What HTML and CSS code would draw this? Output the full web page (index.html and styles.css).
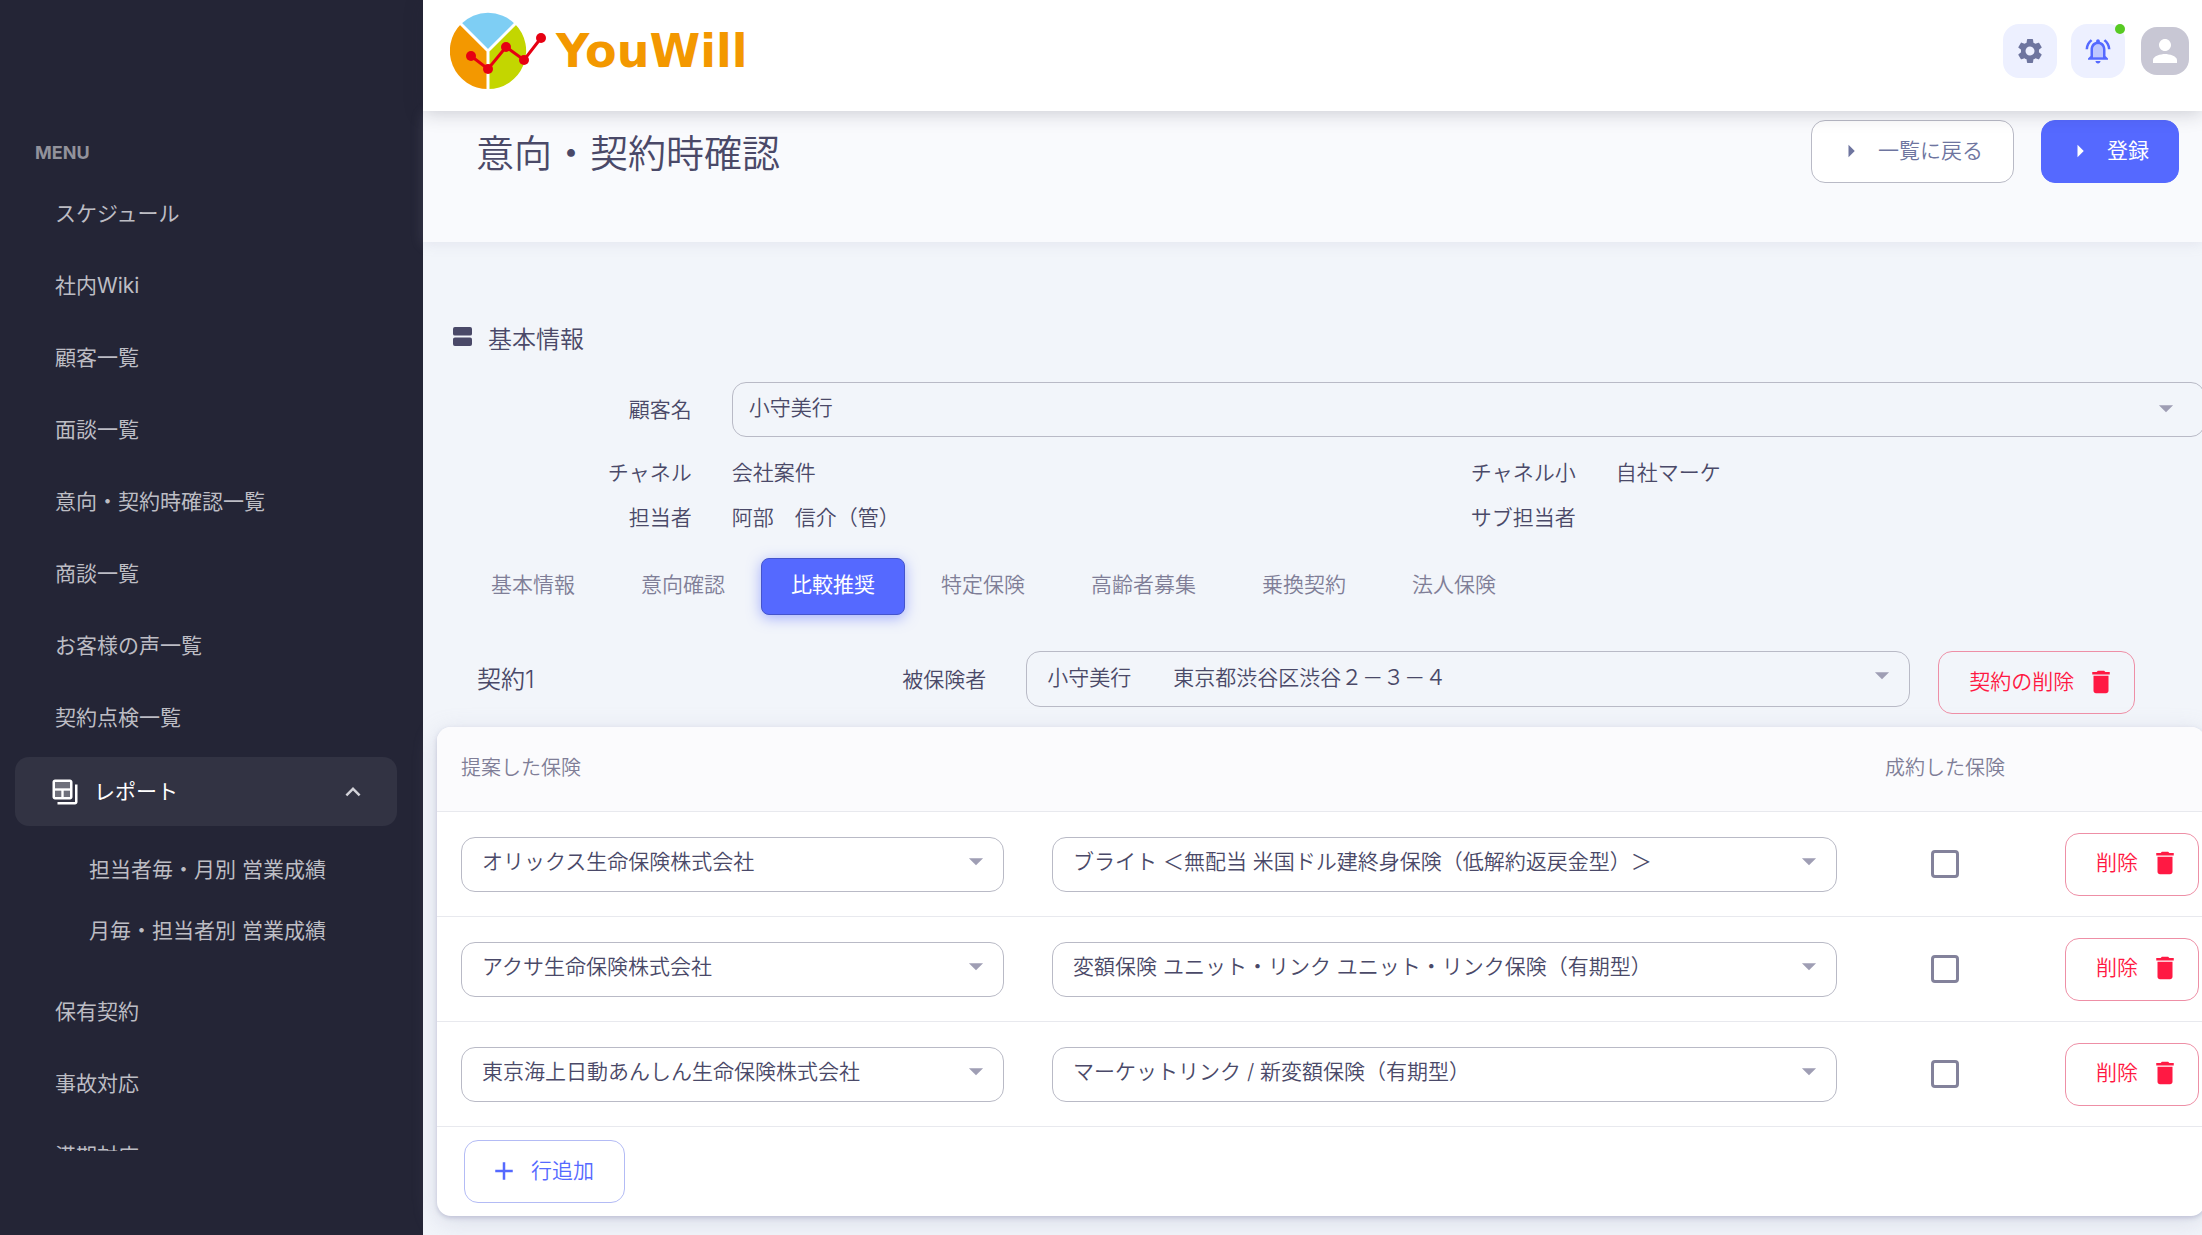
FILE: index.html
```html
<!DOCTYPE html>
<html lang="ja">
<head>
<meta charset="utf-8">
<meta name="viewport" content="width=device-width, initial-scale=1">
<title>意向・契約時確認 | YouWill</title>
<link rel="stylesheet" href="styles.css">
</head>
<body>
<svg class="sprite" aria-hidden="true">
  <symbol id="i-delete" viewBox="0 0 24 24"><path d="M6 19c0 1.1.9 2 2 2h8c1.1 0 2-.9 2-2V7H6v12zM19 4h-3.5l-1-1h-5l-1 1H5v2h14V4z"/></symbol>
  <symbol id="i-right" viewBox="0 0 24 24"><path d="M10 17l5-5-5-5v10z"/></symbol>
  <symbol id="i-down" viewBox="0 0 24 24"><path d="M7 10l5 5 5-5z"/></symbol>
  <symbol id="i-add" viewBox="0 0 24 24"><path d="M19 13h-6v6h-2v-6H5v-2h6V5h2v6h6v2z"/></symbol>
  <symbol id="i-up" viewBox="0 0 24 24"><path d="M12 8l-6 6 1.410 1.410L12 10.830l4.590 4.580L18 14z"/></symbol>
  <symbol id="i-table" viewBox="0 0 24 24"><path opacity=".3" d="M4 4h12v5H4z"/><path opacity=".3" d="M4 11h5v5H4zM11 11h5v5h-5z"/><path d="M20 6v14H6v2h14c1.100 0 2-.9 2-2V6h-2z"/><path d="M16 2H4c-1.100 0-2 .9-2 2v12c0 1.100.9 2 2 2h12c1.100 0 2-.9 2-2V4c0-1.100-.9-2-2-2zM9 16H4v-5h5v5zm7 0h-5v-5h5v5zm0-7H4V4h12v5z"/></symbol>
  <symbol id="i-settings" viewBox="0 0 24 24"><path d="M19.140 12.940c.04-.3.06-.61.06-.94 0-.32-.02-.64-.07-.94l2.030-1.580c.18-.14.23-.41.12-.61l-1.920-3.320c-.12-.22-.37-.29-.59-.22l-2.390.96c-.5-.38-1.030-.7-1.620-.94l-.36-2.540c-.04-.24-.24-.41-.48-.41h-3.840c-.24 0-.43.17-.47.41l-.36 2.540c-.59.24-1.130.57-1.620.94l-2.390-.96c-.22-.08-.47 0-.59.22L2.740 8.870c-.12.21-.08.47.12.61l2.030 1.580c-.05.3-.09.63-.09.94s.02.64.07.94l-2.030 1.580c-.18.14-.23.41-.12.61l1.920 3.320c.12.22.37.29.59.22l2.390-.96c.5.38 1.030.7 1.620.94l.36 2.540c.05.24.24.41.48.41h3.840c.24 0 .44-.17.47-.41l.36-2.540c.59-.24 1.130-.56 1.620-.94l2.390.96c.22.08.47 0 .59-.22l1.920-3.320c.12-.22.07-.47-.12-.61l-2.010-1.580zM12 15.600c-1.980 0-3.600-1.620-3.600-3.600s1.620-3.600 3.600-3.600 3.600 1.620 3.600 3.600-1.620 3.600-3.600 3.600z"/></symbol>
  <symbol id="i-bell" viewBox="0 0 24 24"><path opacity=".3" d="M12 6.500c-2.490 0-4 2.020-4 4.500v6h8v-6c0-2.480-1.510-4.500-4-4.500z"/><path d="M12 22c1.100 0 2-.9 2-2h-4c0 1.100.9 2 2 2zm6-6v-5c0-3.070-1.630-5.640-4.500-6.320V4c0-.83-.67-1.500-1.500-1.500s-1.500.67-1.500 1.500v.68C7.640 5.360 6 7.920 6 11v5l-2 2v1h16v-1l-2-2zm-2 1H8v-6c0-2.480 1.510-4.500 4-4.500s4 2.020 4 4.500v6zM7.580 4.080L6.150 2.650C3.750 4.480 2.170 7.300 2.030 10.500h2c.15-2.650 1.510-4.970 3.550-6.420zm12.390 6.420h2c-.15-3.200-1.730-6.020-4.120-7.850l-1.420 1.430c2.020 1.450 3.390 3.770 3.540 6.420z"/></symbol>
  <symbol id="i-person" viewBox="0 0 24 24"><path d="M12 12c2.210 0 4-1.790 4-4s-1.790-4-4-4-4 1.790-4 4 1.790 4 4 4zm0 2c-2.670 0-8 1.340-8 4v2h16v-2c0-2.660-5.330-4-8-4z"/></symbol>
  <symbol id="i-agenda" viewBox="0 0 20 20"><rect width="20" height="9" rx="2"/><rect y="11" width="20" height="9" rx="2"/></symbol>
</svg>

<div class="app">
  <aside class="sidebar">
    <h2 class="menu-title">MENU</h2>
    <nav class="menu" aria-label="MENU">
      <a class="menu-item" href="#">スケジュール</a>
      <a class="menu-item" href="#">社内Wiki</a>
      <a class="menu-item" href="#">顧客一覧</a>
      <a class="menu-item" href="#">面談一覧</a>
      <a class="menu-item" href="#">意向・契約時確認一覧</a>
      <a class="menu-item" href="#">商談一覧</a>
      <a class="menu-item" href="#">お客様の声一覧</a>
      <a class="menu-item" href="#">契約点検一覧</a>
      <button class="menu-item menu-group" type="button" aria-expanded="true">
        <svg class="icon"><use href="#i-table"/></svg>
        <span>レポート</span>
        <svg class="icon menu-chevron"><use href="#i-up"/></svg>
      </button>
      <div class="submenu">
        <a class="submenu-item" href="#">担当者毎・月別 営業成績</a>
        <a class="submenu-item" href="#">月毎・担当者別 営業成績</a>
      </div>
      <a class="menu-item" href="#">保有契約</a>
      <a class="menu-item" href="#">事故対応</a>
      <a class="menu-item" href="#">満期対応</a>
    </nav>
  </aside>

  <div class="page">
    <header class="topbar">
      <a class="brand" href="#" aria-label="YouWill">
        <svg class="brand-mark" viewBox="0 0 100 78" aria-hidden="true">
          <path fill="#f39800" d="M38 39L11 12.100A38 38 0 0 0 38 77z"/>
          <path fill="#c3d600" d="M38 39L65 12.100A38 38 0 0 1 38 77z"/>
          <path fill="#7ecef4" d="M38 39L11 12.100A38 38 0 0 1 65 12.100z"/>
          <path fill="none" stroke="#fff" stroke-width="3" d="M10 11l28 28 28-28M38 39v39"/>
          <path fill="none" stroke="#e60012" stroke-width="3" d="M21 44l17 13 18-22 18 13 17-22"/>
          <g fill="#e60012"><circle cx="21" cy="44" r="5"/><circle cx="38" cy="57" r="5"/><circle cx="56" cy="35" r="5"/><circle cx="74" cy="48" r="5"/><circle cx="91" cy="26" r="5"/></g>
        </svg>
        <span class="brand-name">YouWill</span>
      </a>
      <div class="tools">
        <button class="tool tool-settings" type="button" aria-label="設定"><svg class="icon"><use href="#i-settings"/></svg></button>
        <button class="tool tool-bell" type="button" aria-label="通知"><svg class="icon"><use href="#i-bell"/></svg><span class="dot"></span></button>
        <button class="avatar" type="button" aria-label="アカウント"><svg class="icon"><use href="#i-person"/></svg></button>
      </div>
    </header>

    <section class="banner">
      <h1>意向・契約時確認</h1>
      <div class="banner-actions">
        <button class="btn btn-grey" type="button"><svg class="icon"><use href="#i-right"/></svg>一覧に戻る</button>
        <button class="btn btn-primary" type="button"><svg class="icon"><use href="#i-right"/></svg>登録</button>
      </div>
    </section>

    <main class="content">
      <h2 class="section-title"><svg><use href="#i-agenda"/></svg>基本情報</h2>

      <div class="field-row">
        <label class="field-label" for="customer">顧客名</label>
        <div class="select">
          <select id="customer"><option>小守美行</option></select>
          <svg class="icon"><use href="#i-down"/></svg>
        </div>
      </div>
      <dl class="facts">
        <div class="fact"><dt>チャネル</dt><dd>会社案件</dd></div>
        <div class="fact"><dt>チャネル小</dt><dd>自社マーケ</dd></div>
        <div class="fact"><dt>担当者</dt><dd>阿部　信介（管）</dd></div>
        <div class="fact"><dt>サブ担当者</dt><dd></dd></div>
      </dl>

      <div class="tabs" role="tablist">
        <button class="tab" type="button" role="tab">基本情報</button>
        <button class="tab" type="button" role="tab">意向確認</button>
        <button class="tab tab-active" type="button" role="tab" aria-selected="true">比較推奨</button>
        <button class="tab" type="button" role="tab">特定保険</button>
        <button class="tab" type="button" role="tab">高齢者募集</button>
        <button class="tab" type="button" role="tab">乗換契約</button>
        <button class="tab" type="button" role="tab">法人保険</button>
      </div>

      <div class="contract">
        <h3>契約1</h3>
        <label class="contract-label" for="insured">被保険者</label>
        <div class="select">
          <select id="insured"><option>小守美行　　東京都渋谷区渋谷２－３－４</option></select>
          <svg class="icon"><use href="#i-down"/></svg>
        </div>
        <button class="btn btn-danger" type="button">契約の削除<svg class="icon"><use href="#i-delete"/></svg></button>
      </div>

      <div class="card">
        <table>
          <colgroup><col class="col-company"><col><col class="col-check"><col class="col-action"></colgroup>
          <thead>
            <tr><th scope="col">提案した保険</th><th></th><th scope="col">成約した保険</th><th></th></tr>
          </thead>
          <tbody>
            <tr>
              <td><div class="select"><select aria-label="保険会社"><option>オリックス生命保険株式会社</option></select><svg class="icon"><use href="#i-down"/></svg></div></td>
              <td><div class="select"><select aria-label="保険商品"><option>ブライト ＜無配当 米国ドル建終身保険（低解約返戻金型）＞</option></select><svg class="icon"><use href="#i-down"/></svg></div></td>
              <td class="cell-check"><input type="checkbox" aria-label="成約した保険"></td>
              <td class="cell-action"><button class="btn btn-danger" type="button">削除<svg class="icon"><use href="#i-delete"/></svg></button></td>
            </tr>
            <tr>
              <td><div class="select"><select aria-label="保険会社"><option>アクサ生命保険株式会社</option></select><svg class="icon"><use href="#i-down"/></svg></div></td>
              <td><div class="select"><select aria-label="保険商品"><option>変額保険 ユニット・リンク ユニット・リンク保険（有期型）</option></select><svg class="icon"><use href="#i-down"/></svg></div></td>
              <td class="cell-check"><input type="checkbox" aria-label="成約した保険"></td>
              <td class="cell-action"><button class="btn btn-danger" type="button">削除<svg class="icon"><use href="#i-delete"/></svg></button></td>
            </tr>
            <tr>
              <td><div class="select"><select aria-label="保険会社"><option>東京海上日動あんしん生命保険株式会社</option></select><svg class="icon"><use href="#i-down"/></svg></div></td>
              <td><div class="select"><select aria-label="保険商品"><option>マーケットリンク / 新変額保険（有期型）</option></select><svg class="icon"><use href="#i-down"/></svg></div></td>
              <td class="cell-check"><input type="checkbox" aria-label="成約した保険"></td>
              <td class="cell-action"><button class="btn btn-danger" type="button">削除<svg class="icon"><use href="#i-delete"/></svg></button></td>
            </tr>
          </tbody>
        </table>
        <div class="card-footer">
          <button class="btn btn-add" type="button"><svg class="icon"><use href="#i-add"/></svg>行追加</button>
        </div>
      </div>
    </main>
  </div>
</div>
</body>
</html>
```
FILE: styles.css
```css
:root {
  --ink: #4a4968;
  --muted: #7f7e97;
  --primary: #5569ff;
  --danger: #ff1943;
  --line: #b9bac6;
}

* { box-sizing: border-box; }

body {
  margin: 0;
  overflow: hidden;
  font: 350 21px/32px Inter, "Noto Sans CJK JP", sans-serif;
  color: var(--ink);
  background: #f2f5fa;
}

h1, h2, h3, dl, dd { margin: 0; font-weight: 350; }
button, select { font: inherit; color: inherit; }
button { cursor: pointer; }
a { color: inherit; text-decoration: none; }

.sprite { position: absolute; width: 0; height: 0; }
.icon { width: 30px; height: 30px; flex: none; fill: currentColor; display: block; }

.app { display: flex; height: 100vh; }

/* Sidebar */
.sidebar {
  flex: none;
  width: 423px;
  padding: 137px 26px 84px 15px;
  display: flex;
  flex-direction: column;
  background: #242536;
  color: #bdbdc4;
}
.menu-title {
  padding: 0 20px;
  margin-bottom: 10px;
  font-size: 18px;
  font-weight: 700;
  color: #92929b;
}
.menu {
  flex: 1;
  min-height: 0;
  overflow: hidden;
  display: flex;
  flex-direction: column;
  gap: 3px;
  font-weight: 400;
}
.menu-item {
  flex: none;
  display: flex;
  align-items: center;
  height: 69px;
  padding: 0 40px;
  border: 0;
  border-radius: 14px;
}
.menu-group {
  margin-top: 2px;
  padding: 0 29px 0 35px;
  gap: 14px;
  background: #323343;
  color: #fff;
}
.menu-chevron { margin-left: auto; color: #d3d3d9; }
.submenu { padding: 10px 0 13px; }
.submenu-item {
  display: flex;
  align-items: center;
  height: 61px;
  padding-left: 74px;
  white-space: nowrap;
}

/* Top bar */
.page { flex: 1; min-width: 0; }
.topbar {
  position: relative;
  z-index: 1;
  display: flex;
  align-items: center;
  justify-content: space-between;
  height: 111px;
  padding: 0 13px 9px 27px;
  background: #fff;
  box-shadow: 0 2px 18px rgba(36, 37, 54, .22);
}
.brand { display: flex; align-items: center; gap: 6px; }
.brand-mark { width: 100px; height: 78px; }
.brand-name {
  font: 700 46px/60px "DejaVu Sans", sans-serif;
  color: #f39800;
}
.tools { display: flex; align-items: center; gap: 14px; }
.tool, .avatar {
  display: flex;
  align-items: center;
  justify-content: center;
  border: 0;
  padding: 0;
}
.tool { position: relative; width: 54px; height: 54px; border-radius: 16px; background: #edf0ff; }
.tool-settings { color: #6e759f; }
.tool-bell { color: var(--primary); }
.dot { position: absolute; top: 0; right: 0; width: 10px; height: 10px; border-radius: 50%; background: #57ca22; }
.avatar { width: 48px; height: 48px; margin-left: 2px; border-radius: 16px; background: #c8c7d4; color: #fff; }
.avatar .icon { width: 36px; height: 36px; }

/* Page banner */
.banner {
  display: flex;
  align-items: flex-start;
  justify-content: space-between;
  height: 131px;
  padding: 9px 23px 0 53px;
  background: #f9fafd;
  box-shadow: 0 2px 12px rgba(159, 162, 191, .18);
}
.banner h1 { font-size: 38px; line-height: 66px; }
.banner-actions { display: flex; gap: 27px; }

/* Buttons */
.btn {
  display: inline-flex;
  align-items: center;
  gap: 12px;
  height: 63px;
  padding: 0 30px 2px 24px;
  border: 1px solid var(--line);
  border-radius: 14px;
  background: transparent;
  white-space: nowrap;
}
.btn-grey { background: #fff; color: #6e759f; }
.btn-primary { padding: 0 29px 2px 23px; border-color: var(--primary); background: var(--primary); color: #fff; font-weight: 400; }
.btn-danger { padding: 0 18px 2px 30px; border-color: #ee8fa6; color: var(--danger); }
.btn-add { border-color: #b3bbf5; color: var(--primary); }

/* Form */
.content { padding: 80px 0 0 14px; margin-right: -3px; }
.section-title {
  display: flex;
  align-items: center;
  gap: 16px;
  padding-left: 16px;
  font-size: 24px;
  line-height: 36px;
}
.section-title svg { width: 19px; height: 19px; margin-bottom: 8px; fill: var(--ink); }

.select { position: relative; }
.select select {
  display: block;
  width: 100%;
  height: 55px;
  padding: 0 60px 4px 20px;
  border: 1px solid var(--line);
  border-radius: 14px;
  background: transparent;
  appearance: none;
}
.select .icon {
  position: absolute;
  right: 11px;
  top: 7px;
  width: 34px;
  height: 34px;
  color: #9f9eb4;
  pointer-events: none;
}

.field-row { display: grid; grid-template-columns: 1fr 5fr; align-items: center; margin-top: 24px; }
.field-label, .facts dt { padding-right: 40px; text-align: right; }
.field-row select { padding-left: 16px; }
.field-row .select .icon { right: 22px; top: 9px; }

.facts { display: grid; grid-template-columns: 1fr 1fr; row-gap: 13px; margin-top: 20px; }
.fact { display: grid; grid-template-columns: 1fr 2fr; }

.tabs { display: flex; gap: 6px; margin-top: 24px; padding-left: 24px; }
.tab {
  height: 57px;
  padding: 0 29px 3px;
  border: 1px solid transparent;
  border-radius: 8px;
  background: transparent;
  color: var(--muted);
}
.tab-active {
  border-color: #4454cc;
  background: var(--primary);
  color: #fff;
  font-weight: 400;
  box-shadow: 0 3px 14px rgba(85, 105, 255, .5);
}

.contract {
  display: grid;
  grid-template-columns: 1fr 1fr 3fr 1fr;
  align-items: start;
  margin-top: 36px;
}
.contract h3 { padding-left: 40px; font-size: 24px; line-height: 58px; }
.contract-label { padding-right: 40px; line-height: 58px; text-align: right; }
.contract select { height: 56px; padding-bottom: 3px; }
.contract .btn { justify-self: start; margin-left: 28px; }

/* Table card */
.card {
  margin-top: 13px;
  border-radius: 14px;
  background: #fff;
  box-shadow: 0 2px 4px rgba(159, 162, 191, .5), 0 6px 24px rgba(159, 162, 191, .3);
}
table { width: 100%; border-collapse: separate; border-spacing: 0; table-layout: fixed; }
.col-company { width: 591px; }
.col-check { width: 168px; }
.col-action { width: 176px; }
th, td { padding: 0 24px; border-bottom: 1px solid #e8e9ee; text-align: left; vertical-align: middle; }
th { height: 85px; padding-bottom: 2px; background: #fbfbfd; color: var(--muted); font-size: 20px; font-weight: 350; }
th:first-child { border-top-left-radius: 14px; }
th:last-child { border-top-right-radius: 14px; }
td { height: 105px; }
.cell-check { text-align: center; }
.cell-check input {
  display: block;
  width: 28px;
  height: 28px;
  margin: 0 auto;
  appearance: none;
  border: 3px solid #83829b;
  border-radius: 4px;
}
.cell-action { padding: 0 6px 0 0; text-align: right; }
.cell-action .btn { vertical-align: middle; }
.card-footer { display: flex; padding: 13px 27px; }
```
